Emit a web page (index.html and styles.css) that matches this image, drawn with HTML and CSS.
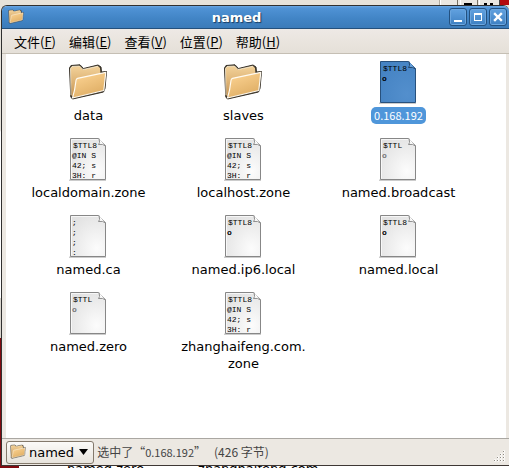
FILE: index.html
```html
<!DOCTYPE html>
<html lang="zh-CN">
<head>
<meta charset="utf-8">
<title>named</title>
<link rel="stylesheet" href="styles.css">
</head>
<body>
<svg class="defs" aria-hidden="true">
  <defs>
    <linearGradient id="fback" x1="0" y1="0" x2="0" y2="1"><stop offset="0" stop-color="#f3d29a"/><stop offset="1" stop-color="#c99652"/></linearGradient>
    <linearGradient id="ffront" x1="0" y1="0" x2="0.5" y2="1"><stop offset="0" stop-color="#ffd797"/><stop offset="1" stop-color="#dfae65"/></linearGradient>
    <radialGradient id="paper" cx="0.75" cy="0.8" r="0.9"><stop offset="0" stop-color="#fcfcfc"/><stop offset="1" stop-color="#e2e2e2"/></radialGradient>
    <radialGradient id="paper-blue" cx="0.75" cy="0.8" r="0.9"><stop offset="0" stop-color="#538fcd"/><stop offset="1" stop-color="#4583c3"/></radialGradient>
    <symbol id="folder" viewBox="0 0 40 38">
      <path d="M1.500 4 L3 1.500 L12 .8 L15.500 4.500 L30 1 L33 3 L33.500 8 L38.500 7.500 L37 24.500 L35.500 28 L4.500 35 L2.800 33 Z" fill="#3a342a" stroke="#3a342a" stroke-width="1" stroke-linejoin="round"/>
      <path d="M2.500 4 L4 2.500 L11.500 2 L15 5.500 L30 2 L32 4 L32.500 10 L5 32 L3.500 32 Z" fill="url(#fback)"/>
      <path d="M3 31 L2.500 4.500 L4 2.500 L11.500 2 L15 5.500 L30 2.200" fill="none" stroke="#fff3d8" stroke-width=".8"/>
      <path d="M8 16.500 Q8.200 14.800 9.500 14.400 L37.800 8.300 L35.800 26.500 L4.500 34 Q7 26 8 16.500 Z" fill="url(#ffront)" stroke="#fffaf0" stroke-width="1.200" stroke-linejoin="round"/>
    </symbol>
    <symbol id="doc" viewBox="0 0 40 46">
      <path d="M1 42.500 H38 V44 H1 Z" fill="#000" opacity=".2"/>
      <path d="M2.500 1.500 H30.500 L37.500 8.500 V42.500 H2.500 Z" fill="url(#paper)" stroke="#878787"/>
      <path d="M3.500 41.500 V2.500 H30" fill="none" stroke="#fff" opacity=".7"/>
      <path d="M31 1.500 Q32.500 6.500 30.500 7.500 Q35 6.500 37.500 9" fill="#fff" stroke="#8d8d8d"/>
    </symbol>
    <symbol id="doc-blue" viewBox="0 0 40 46">
      <path d="M1 42.500 H38 V44 H1 Z" fill="#000" opacity=".2"/>
      <path d="M2.500 1.500 H30.500 L37.500 8.500 V42.500 H2.500 Z" fill="url(#paper-blue)" stroke="#28517d"/>
      <path d="M31 1.500 Q32.500 6.500 30.500 7.500 Q35 6.500 37.500 9" fill="#69a4e0" stroke="#24476b"/>
    </symbol>
  </defs>
</svg>
<div class="desktop">
  <div class="behind-top" aria-hidden="true">
    <svg width="70" height="5" viewBox="0 0 70 5"><path d="M0 0h60v5H0z" fill="#eae7e1"/><path d="M0 0v5M18.500 0v5M38.500 0v5" stroke="#777061"/><path d="M1.500 0v5M21.500 0v5M40.500 0v5" stroke="#fff"/><path d="M25 3h8v2h-8zM45 3h3v2h-3zM51 3h3v2h-3z" fill="#000"/><path d="M60 0h1v5h-1z" fill="#444"/><path d="M61 0h9v5h-9z" fill="#b3090d"/></svg>
  </div>
  <main class="window">
    <header class="titlebar">
      <svg class="mini" viewBox="0 0 40 38"><use href="#folder"/></svg>
      <h1>named</h1>
      <div class="controls">
        <button type="button" aria-label="最小化"><svg viewBox="0 0 16 16"><path d="M4 11h8v2H4z" fill="#fff"/></svg></button>
        <button type="button" aria-label="最大化"><svg viewBox="0 0 16 16"><path d="M4 4h8v8H4zM5 6v5h6V6z" fill="#fff" fill-rule="evenodd"/></svg></button>
        <button type="button" aria-label="关闭"><svg viewBox="0 0 16 16"><path d="M5 5l6 6M11 5l-6 6" stroke="#fff" stroke-width="2.400" stroke-linecap="square"/></svg></button>
      </div>
    </header>
    <nav class="menubar">
      <button type="button">文件(<u>F</u>)</button>
      <button type="button">编辑(<u>E</u>)</button>
      <button type="button">查看(<u>V</u>)</button>
      <button type="button">位置(<u>P</u>)</button>
      <button type="button">帮助(<u>H</u>)</button>
    </nav>
    <ul class="files">
      <li><svg class="icon" viewBox="1 0 40 46"><use href="#folder" x="0" y="4" width="40" height="38"/></svg><span>data</span></li>
      <li><svg class="icon" viewBox="1 0 40 46"><use href="#folder" x="0" y="4" width="40" height="38"/></svg><span>slaves</span></li>
      <li class="selected"><svg class="icon" viewBox="1 0 40 46"><use href="#doc-blue" width="40" height="46"/><text x="5" y="11">$TTL8</text><text class="bold" x="4" y="21">o</text></svg><span>0.168.192</span></li>
      <li><svg class="icon" viewBox="1 0 40 46"><use href="#doc" width="40" height="46"/><text x="5" y="11">$TTL8</text><text x="4" y="21">@IN S</text><text x="4" y="31">42; s</text><text x="4" y="41">3H: r</text></svg><span>localdomain.zone</span></li>
      <li><svg class="icon" viewBox="1 0 40 46"><use href="#doc" width="40" height="46"/><text x="5" y="11">$TTL8</text><text x="4" y="21">@IN S</text><text x="4" y="31">42; s</text><text x="4" y="41">3H: r</text></svg><span>localhost.zone</span></li>
      <li><svg class="icon" viewBox="1 0 40 46"><use href="#doc" width="40" height="46"/><text x="5" y="11">$TTL</text><text class="faint" x="4" y="21">o</text></svg><span>named.broadcast</span></li>
      <li><svg class="icon" viewBox="1 0 40 46"><use href="#doc" width="40" height="46"/><text x="4" y="11">;</text><text x="4" y="21">;</text><text x="4" y="31">;</text><text x="4" y="41">:</text></svg><span>named.ca</span></li>
      <li><svg class="icon" viewBox="1 0 40 46"><use href="#doc" width="40" height="46"/><text x="5" y="11">$TTL8</text><text class="bold" x="4" y="21">o</text></svg><span>named.ip6.local</span></li>
      <li><svg class="icon" viewBox="1 0 40 46"><use href="#doc" width="40" height="46"/><text x="5" y="11">$TTL8</text><text class="bold" x="4" y="21">o</text></svg><span>named.local</span></li>
      <li><svg class="icon" viewBox="1 0 40 46"><use href="#doc" width="40" height="46"/><text x="5" y="11">$TTL</text><text class="faint" x="4" y="21">o</text></svg><span>named.zero</span></li>
      <li><svg class="icon" viewBox="1 0 40 46"><use href="#doc" width="40" height="46"/><text x="5" y="11">$TTL8</text><text x="4" y="21">@IN S</text><text x="4" y="31">42; s</text><text x="4" y="41">3H: r</text></svg><span>zhanghaifeng.com.<wbr>zone</span></li>
    </ul>
    <footer class="statusbar">
      <button type="button" class="location"><svg class="mini" viewBox="0 0 40 38"><use href="#folder"/></svg>named<svg class="arrow" viewBox="0 0 9 6"><path d="M0 0h9L4.500 6z" fill="#000"/></svg></button>
      <p><span>选中了“<span class="num">0.168.192</span>”</span><span>(426 字节)</span></p>
      <svg class="grip" viewBox="0 0 12 12" aria-hidden="true"><path d="M10 1.500h2M10 4.500h2M7 4.500h2M10 7.500h2M7 7.500h2M4 7.500h2M10 10.500h2M7 10.500h2M4 10.500h2M1 10.500h2" stroke="#fff" stroke-width="2"/><path d="M10 1.500h1M10 4.500h1M7 4.500h1M10 7.500h1M7 7.500h1M4 7.500h1M10 10.500h1M7 10.500h1M4 10.500h1M1 10.500h1" stroke="#8f8b83"/></svg>
    </footer>
  </main>
  <div class="behind-bottom" aria-hidden="true"><span>named.zero</span><span>zhanghaifeng.com</span></div>
</div>
</body>
</html>
```
FILE: styles.css
```css
* { box-sizing: border-box; }
body {
  margin: 0;
  font: 13px/17px "DejaVu Sans", "Noto Sans CJK SC", sans-serif;
  color: #000;
}
button { font: inherit; color: inherit; padding: 0; }
.defs { position: absolute; width: 0; height: 0; }
.desktop {
  display: flex;
  flex-direction: column;
  min-height: 100vh;
  padding-left: 1px;
  background: linear-gradient(#e6e2da 0 130px, #fff 132px 298px, #d9d5cd 298px 338px, #800a10 338px);
}
.behind-top {
  display: flex;
  justify-content: flex-end;
  height: 5px;
  background: #e6e2da;
}
.behind-bottom {
  display: flex;
  gap: 54px;
  height: 2px;
  margin-left: 18px;
  padding-left: 48px;
  line-height: 6px;
  background: #fff;
  overflow: hidden;
}
.window {
  display: flex;
  flex: 1;
  flex-direction: column;
  border: 1px solid #303030;
  border-right: 0;
  border-bottom-color: #3e3734;
  border-radius: 6px 6px 0 0;
  background: #ece8e2;
  overflow: hidden;
}
.titlebar {
  display: flex;
  align-items: center;
  height: 23px;
  padding: 0 2px 0 6px;
  border-bottom: 1px solid #24507c;
  background: linear-gradient(#6ba8e4 0, #5093d5 2px, #4285c6 55%, #3b7bb9);
}
.mini { width: 16px; height: 16px; flex: none; }
h1 {
  flex: 1;
  margin: 0;
  font-size: 13px;
  line-height: 17px;
  text-align: center;
  color: #fff;
  text-shadow: 1px 1px 1px #1b3c60;
}
.controls { display: flex; gap: 2px; }
.controls button {
  width: 18px;
  height: 18px;
  border: 1px solid #235180;
  border-radius: 3px;
  background: linear-gradient(#62a2e0, #3e80c2);
  box-shadow: inset 0 0 0 1px #6ba6df;
}
.controls svg { display: block; width: 16px; height: 16px; }
.menubar {
  display: flex;
  gap: 13px;
  height: 25px;
  padding: 0 12px;
  border-bottom: 1px solid #c5bfb4;
  background: linear-gradient(#eee9e5, #e5e0d8);
}
.menubar button {
  border: 0;
  background: none;
  font-family: "Noto Sans CJK SC", sans-serif;
}
.files {
  display: grid;
  flex: 1;
  grid-template-columns: repeat(auto-fill, 155px);
  align-content: start;
  gap: 13px 0;
  margin: 0 3px 0 4px;
  padding: 6px 5px;
  list-style: none;
  background: #fff;
}
.files li {
  display: flex;
  flex-direction: column;
  align-items: center;
  gap: 1px;
  text-align: center;
}
.files span { max-width: 140px; }
.icon { width: 40px; height: 46px; }
.icon text { font: 8px "Liberation Mono", monospace; fill: #000; }
.icon .bold { font-weight: bold; }
.icon .faint { font-weight: bold; fill: #777; }
.files .selected span {
  padding: 0 3px;
  border-radius: 5px;
  background: #4f96da;
  color: #fff;
  font-family: "Noto Sans CJK SC", sans-serif;
  font-size: 11px;
}
.statusbar {
  display: flex;
  align-items: center;
  gap: 3px;
  height: 27px;
  padding: 0 4px;
  border-top: 1px solid #aaa7a2;
}
.location {
  display: flex;
  align-items: center;
  gap: 3px;
  height: 23px;
  padding: 0 5px 0 3px;
  border: 1px solid #83796c;
  border-radius: 3px;
  background: linear-gradient(#fbfaf8, #e7e3dc);
}
.arrow { width: 9px; height: 6px; margin-left: 2px; }
.statusbar p {
  display: flex;
  flex: 1;
  gap: 8px;
  margin: 0;
  color: #444;
  font-family: "Noto Sans CJK SC", sans-serif;
  font-size: 12px;
}
.num { font-size: 11px; }
.grip { align-self: flex-end; width: 12px; height: 12px; margin-bottom: 3px; }
```
